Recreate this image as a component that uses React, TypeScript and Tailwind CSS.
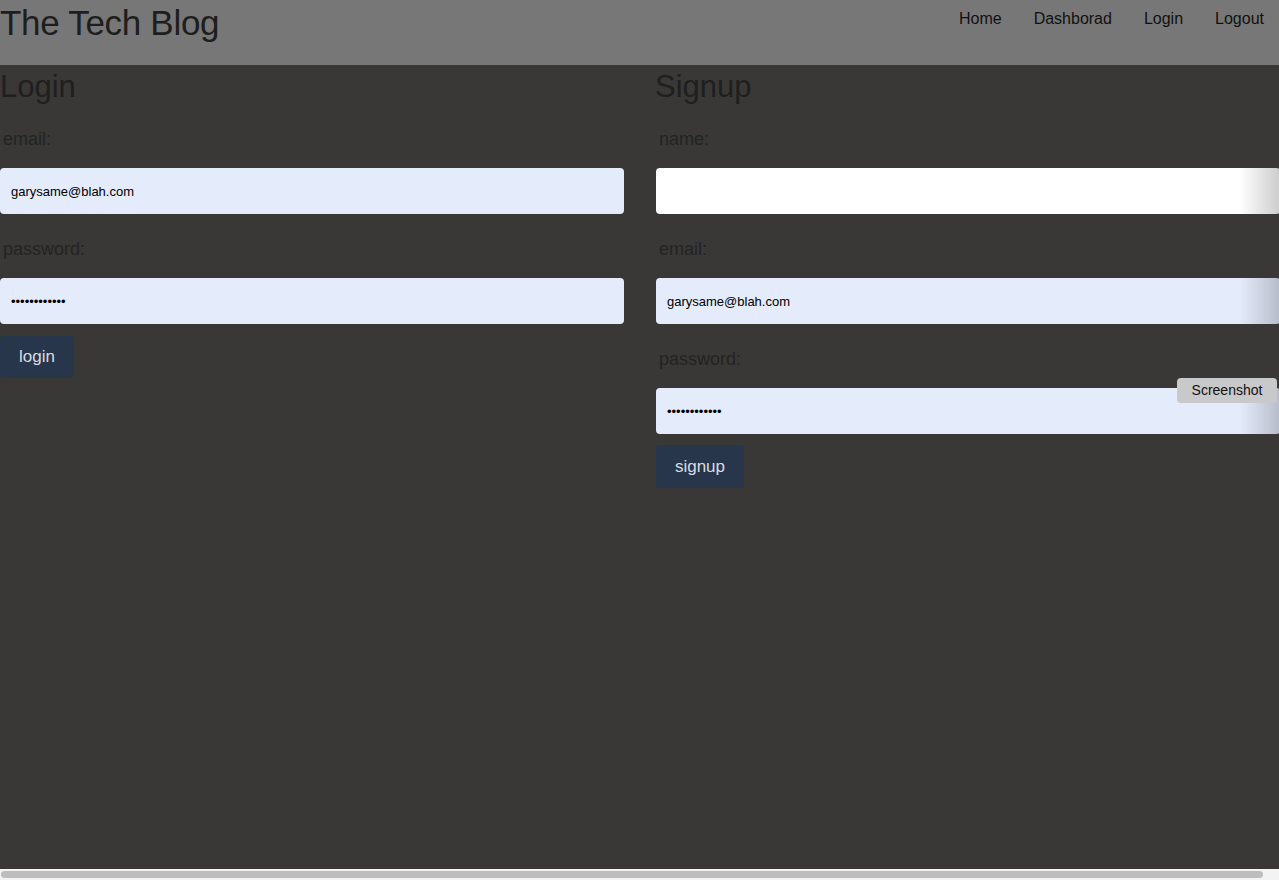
import React from 'react'

const font = { fontFamily: '"Liberation Sans", Arial, sans-serif' }

function Field({ label, value, type = 'text', blank = false, fade = false, first = false }: { label: string; value: string; type?: string; blank?: boolean; fade?: boolean; first?: boolean }) {
  return (
    <div className={`flex flex-col ${first ? '' : 'mt-[24px]'}`}>
      <label className="mb-[18px] pl-[3px] text-[18px] leading-[22px] text-[#232323]">{label}</label>
      <div className="relative">
        <input
          readOnly
          type={type}
          value={value}
          className={`h-[46px] w-full rounded-[4px] px-[11px] text-[13px] text-black outline-none ${blank ? 'bg-white' : 'bg-[#e4ebfb]'}`}
        />
        {fade && (
          <div className="pointer-events-none absolute inset-y-0 right-0 w-[40px] rounded-r-[4px] bg-gradient-to-l from-black/20 to-transparent" />
        )}
      </div>
    </div>
  )
}

export default function App() {
  return (
    <div className="flex h-[880px] w-[1279px] flex-col overflow-hidden bg-[#393836]" style={font}>
      <header className="flex h-[65px] shrink-0 items-start justify-between bg-[#777777]">
        <h1 className="mt-[3px] text-[35px] leading-[40px] tracking-[-0.3px] text-[#1e1e1e]">The Tech Blog</h1>
        <nav className="mt-[9px] flex gap-[32px] pr-[15px] text-[16px] leading-[20px] text-[#111]">
          <a>Home</a>
          <a>Dashborad</a>
          <a>Login</a>
          <a>Logout</a>
        </nav>
      </header>

      <main className="relative grid flex-1 grid-cols-[624px_624px] gap-x-[32px]">
        <section className="flex flex-col">
          <h2 className="mt-[2px] text-[31px] leading-[40px] text-[#1f1f1f]">Login</h2>
          <div className="mt-[21px] flex flex-col">
            <Field first label="email:" value="garysame@blah.com" />
            <Field label="password:" value="garysamepass" type="password" />
          </div>
          <button className="mt-[12px] h-[42px] w-[74px] rounded-[4px] bg-[#27364a] text-[17px] text-[#d8dce2]">login</button>
        </section>

        <section className="flex flex-col">
          <h2 className="mt-[2px] -ml-[1px] text-[31px] leading-[40px] text-[#1f1f1f]">Signup</h2>
          <div className="mt-[21px] flex flex-col">
            <Field first label="name:" value="" blank fade />
            <Field label="email:" value="garysame@blah.com" fade />
            <Field label="password:" value="garysamepass" type="password" fade />
          </div>
          <button className="mt-[11px] h-[43px] w-[88px] rounded-[4px] bg-[#27364a] text-[17px] text-[#d8dce2]">signup</button>
        </section>

        <button className="absolute left-[1177px] top-[313px] h-[25px] w-[100px] rounded-[4px] bg-[#c8c9cb] text-[14px] text-[#111]">
          Screenshot
        </button>
      </main>

      <div className="flex h-[11px] shrink-0 items-center bg-[#f3f3f3] pl-[1px]">
        <div className="h-[7px] w-[1262px] rounded-full bg-[#bdbdbd]" />
      </div>
    </div>
  )
}
